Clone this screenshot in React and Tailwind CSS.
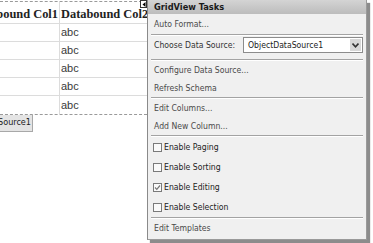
import React from "react";

const Sep = () => (
  <div className="mx-[3px] h-[2px] border-t border-[#a3a3a3] border-b border-b-white" />
);

const Link = ({ children, h = "h-[18px]" }) => (
  <div className={`${h} flex items-center pl-[6px] text-[#4a4a4a]`}>{children}</div>
);

const Check = ({ label, checked }) => (
  <div className="h-[20px] flex items-center pl-[5px] gap-[2px] text-[#222]">
    <div className="w-[9px] h-[9px] border border-[#7a7a7a] bg-[#fafafa] flex items-center justify-center">
      {checked && (
        <svg width="7" height="7" viewBox="0 0 7 7">
          <path d="M1 3.5 L2.8 5.3 L6 1.5" stroke="#777" strokeWidth="1.2" fill="none" />
        </svg>
      )}
    </div>
    <span>{label}</span>
  </div>
);

export default function App() {
  const rows = [0, 1, 2, 3, 4];
  return (
    <div className="w-[373px] h-[243px] bg-white overflow-hidden flex relative">
      {/* Designer grid */}
      <div className="w-[147px] shrink-0 flex flex-col">
        <div className="h-[1px]" />
        <div className="border-t border-b border-dashed border-[#9a9a9a] bg-white">
          <div className="h-[22px] flex border-b border-[#dcdcdc]" style={{ fontFamily: '"Liberation Serif", serif' }}>
            <div className="w-[60px] shrink-0 overflow-hidden flex justify-end items-end pb-[3px] pr-[1px] border-r border-[#dcdcdc]">
              <span className="whitespace-nowrap font-bold text-[12.4px] leading-none text-[#222]">Databound Col1</span>
            </div>
            <div className="flex-1 overflow-hidden flex items-end pb-[3px] pl-[1px]">
              <span className="whitespace-nowrap font-bold text-[12.4px] leading-none text-[#222]">Databound Col2</span>
            </div>
          </div>
          {rows.map((r) => (
            <div key={r} className={`h-[18px] flex ${r < 4 ? "border-b border-[#dcdcdc]" : ""}`}>
              <div className="w-[60px] shrink-0 border-r border-[#dcdcdc]" />
              <div className="flex-1 flex items-center pl-[1px] text-[11px] text-[#3a3a3a]" style={{ fontFamily: '"Liberation Sans", sans-serif' }}>
                abc
              </div>
            </div>
          ))}
        </div>
        <div className="flex">
          <div
            className="h-[17px] w-[33px] bg-[#e4e4e4] border border-[#a8a8a8] border-l-0 border-t-0 flex items-center justify-end pr-[1px] text-[9px] text-[#222] overflow-hidden"
            style={{ fontFamily: '"DejaVu Sans Condensed", "DejaVu Sans", sans-serif' }}
          >
            <span className="whitespace-nowrap">Source1</span>
          </div>
        </div>
      </div>

      {/* smart tag glyph */}
      <div className="absolute left-[140px] top-0 w-[7px] h-[8px] bg-white border border-[#333] flex items-center justify-center">
        <svg width="4" height="5" viewBox="0 0 4 5">
          <path d="M3.5 0 L0.5 2.5 L3.5 5 Z" fill="#000" />
        </svg>
      </div>

      {/* Tasks panel */}
      <div
        className="w-[220px] h-[240px] shrink-0 bg-[#f0f0f0] border-l border-[#8a8a8a] border-r border-b border-r-[#9a9a9a] border-b-[#9a9a9a] shadow-[3px_3px_1px_rgba(0,0,0,0.45)] flex flex-col text-[8.6px]"
        style={{ fontFamily: '"DejaVu Sans Condensed", "DejaVu Sans", sans-serif' }}
      >
        <div className="h-[14px] bg-gradient-to-b from-[#d4d4d4] to-[#bcbcbc] flex items-center pl-[6px] font-bold text-[9.2px] text-[#1a1a1a]">
          GridView Tasks
        </div>
        <Link h="h-[20px]">Auto Format...</Link>
        <Sep />
        <div className="h-[23px] flex items-start pt-[1px] pl-[6px] pr-[3px]">
          <div className="h-[16px] flex items-center text-[#333] w-[89px] shrink-0">Choose Data Source:</div>
          <div className="flex-1 h-[16px] bg-white border border-[#8c8c8c] flex items-center pl-[4px] text-[#222]">
            <span className="flex-1">ObjectDataSource1</span>
            <div className="w-[11px] h-[12px] mr-[1px] bg-[#d8d8d8] flex items-center justify-center">
              <svg width="7" height="5" viewBox="0 0 7 5">
                <path d="M0.5 0.5 L3.5 3.8 L6.5 0.5" stroke="#333" strokeWidth="1.6" fill="none" />
              </svg>
            </div>
          </div>
        </div>
        <Sep />
        <Link h="h-[18px]">Configure Data Source...</Link>
        <Link h="h-[18px]">Refresh Schema</Link>
        <Sep />
        <Link h="h-[18px]">Edit Columns...</Link>
        <Link h="h-[18px]">Add New Column...</Link>
        <Sep />
        <Check label="Enable Paging" />
        <Check label="Enable Sorting" />
        <Check label="Enable Editing" checked />
        <Check label="Enable Selection" />
        <Sep />
        <Link h="h-[19px]">Edit Templates</Link>
      </div>
    </div>
  );
}
